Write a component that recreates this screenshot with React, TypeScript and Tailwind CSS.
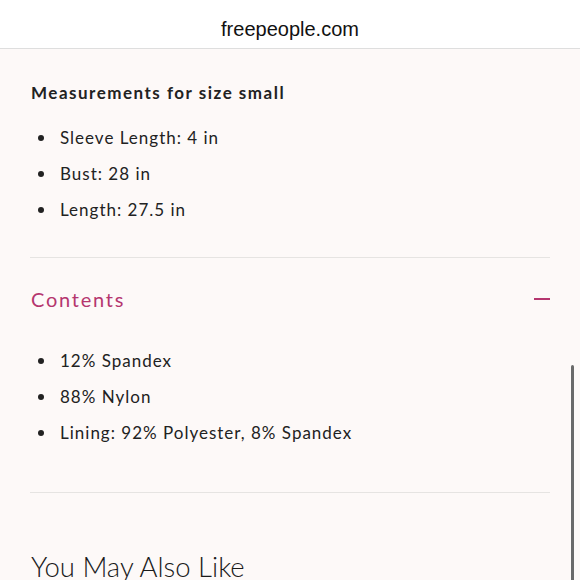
export default function App() {
  const medidas = ['Sleeve Length: 4 in', 'Bust: 28 in', 'Length: 27.5 in']
  const conteudo = ['12% Spandex', '88% Nylon', 'Lining: 92% Polyester, 8% Spandex']

  return (
    <div className="relative h-[580px] w-[580px] overflow-hidden bg-[#fdf9f8] font-['Lato',sans-serif] text-[#222]">
      {/* Barra do navegador */}
      <div className="flex h-[49px] items-center justify-center border-b border-[#dedede] bg-white pt-[10px]">
        <span className="font-['Liberation_Sans',sans-serif] text-[20px] text-[#111]">freepeople.com</span>
      </div>

      <div className="px-[30px]">
        {/* Medidas */}
        <div className="pt-[32px] pb-[35px] border-b border-[#e6e4e2]">
          <h3 className="pl-px text-[17px] font-bold leading-[24px] tracking-[1.5px] text-[#222]">
            Measurements for size small
          </h3>
          <ul className="mt-[21px] flex flex-col gap-[12px]">
            {medidas.map((m) => (
              <li key={m} className="flex items-center text-[17px] leading-[24px] tracking-[1px]">
                <span className="ml-[8px] mr-[16px] h-[6px] w-[6px] rounded-full bg-[#222]" />
                {m}
              </li>
            ))}
          </ul>
        </div>

        {/* Contents */}
        <div className="border-b border-[#e6e4e2] pb-[47px]">
          <div className="flex items-center justify-between pt-[27px]">
            <span className="pl-px text-[20px] leading-[28px] tracking-[1.75px] text-[#b5366f]">Contents</span>
            <span className="h-[2px] w-[16px] bg-[#b5366f]" />
          </div>
          <ul className="mt-[36px] flex flex-col gap-[12px]">
            {conteudo.map((c) => (
              <li key={c} className="flex items-center text-[17px] leading-[24px] tracking-[1px]">
                <span className="ml-[8px] mr-[16px] h-[6px] w-[6px] rounded-full bg-[#222]" />
                {c}
              </li>
            ))}
          </ul>
        </div>

        <h2 className="mt-[56px] pl-px text-[27.5px] font-light leading-[36px] text-[#1a1a1a]">
          You May Also Like
        </h2>
      </div>

      {/* Scrollbar */}
      <div className="absolute right-[6px] top-[365px] h-[220px] w-[3px] rounded-full bg-[#6a6a6a]" />
    </div>
  )
}
